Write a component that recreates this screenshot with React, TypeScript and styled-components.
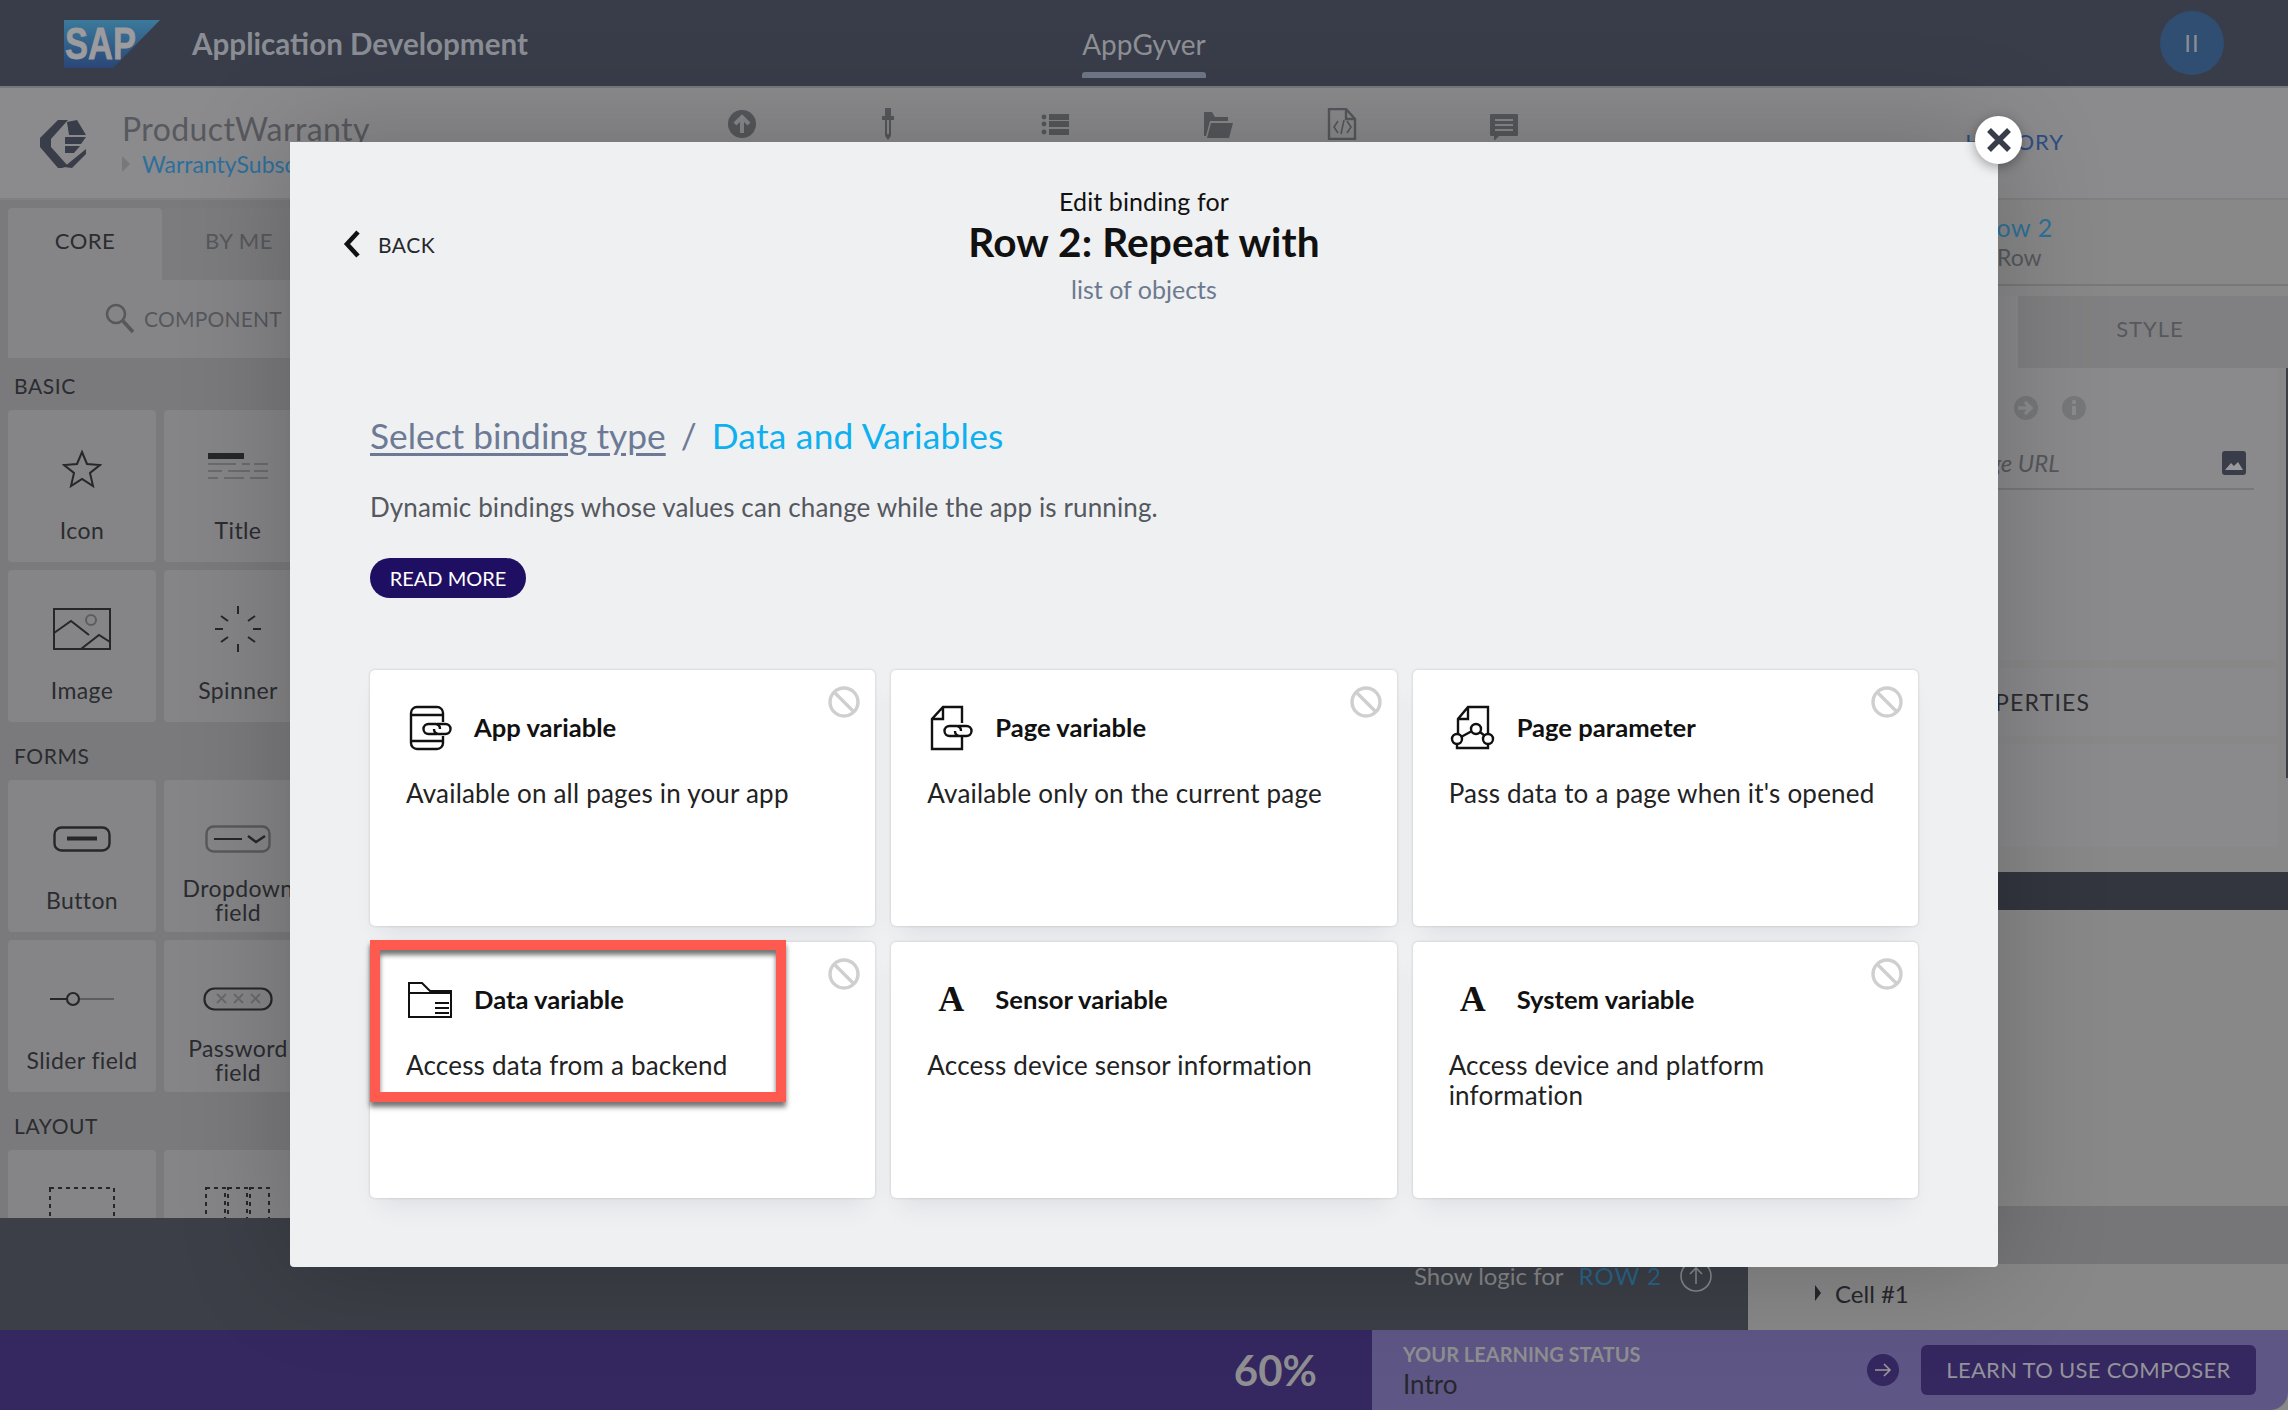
import React from "react"
import styled, { createGlobalStyle } from "styled-components"

const FONT = `Lato, "Open Sans", sans-serif`

const Global = createGlobalStyle`
  html, body {
    margin: 0;
    padding: 0;
    background: #888889;
  }
  * {
    box-sizing: border-box;
  }
`

const Chain = ({ x, y }: { x: number; y: number }) => (
  <g transform={`translate(${x} ${y})`} fill="none" stroke="#111" strokeWidth="2.4">
    <path d="M14 11H5.5a5 5 0 0 1 0-10H13a5 5 0 0 1 4 5" />
    <path d="M14 1h8.5a5 5 0 0 1 0 10H15a5 5 0 0 1-4-5" />
  </g>
)

const AppVarIcon = () => (
  <CardSvg viewBox="0 0 44 44">
    <path d="M35 17V8a6 6 0 0 0-6-6H9a6 6 0 0 0-6 6v30a6 6 0 0 0 6 6h20a6 6 0 0 0 6-6v-7M3 10h32M3 36h32" fill="none" stroke="#111" strokeWidth="2.4" />
    <Chain x={15} y={18} />
  </CardSvg>
)

const PageVarIcon = () => (
  <CardSvg viewBox="0 0 44 44">
    <path d="M33 18V2H14L3 14v30h30V32M14 2v12H3" fill="none" stroke="#111" strokeWidth="2.4" />
    <Chain x={15} y={20} />
  </CardSvg>
)

const PageParamIcon = () => (
  <CardSvg viewBox="0 0 44 44">
    <path d="M37 28V2H17L7 14v15M6 39v4h31v-4M17 2v12H7M10 32l11-6M29 27l5 4" fill="none" stroke="#111" strokeWidth="2.4" />
    <circle cx="6" cy="34" r="5" fill="none" stroke="#111" strokeWidth="2.4" />
    <circle cx="25" cy="24" r="5" fill="none" stroke="#111" strokeWidth="2.4" />
    <circle cx="37" cy="34" r="5" fill="none" stroke="#111" strokeWidth="2.4" />
  </CardSvg>
)

const DataVarIcon = () => (
  <CardSvg viewBox="0 0 44 44">
    <path d="M1 6h13l8 8h21v26H1zM1 16h42" fill="none" stroke="#111" strokeWidth="2" />
    <path d="M27 26h14M27 31h14M27 36h14" fill="none" stroke="#111" strokeWidth="2" />
  </CardSvg>
)

const BlockIcon = () => (
  <BlockSvg viewBox="0 0 32 32">
    <circle cx="16" cy="16" r="14" fill="none" stroke="#cfcfcf" strokeWidth="3.4" />
    <path d="M6 6l20 20" stroke="#cfcfcf" strokeWidth="3.4" />
  </BlockSvg>
)

const LetterIcon = () => <Letter>A</Letter>

const SapLogo = () => (
  <svg width="96" height="48" viewBox="0 0 96 48">
    <defs>
      <linearGradient id="sapBlue" x1="0" y1="0" x2="0" y2="1">
        <stop offset="0" stopColor="#3b7a9b" />
        <stop offset="1" stopColor="#2a4678" />
      </linearGradient>
    </defs>
    <polygon points="0,0 96,0 49,48 0,48" fill="url(#sapBlue)" />
    <text
      x="1"
      y="39"
      fontFamily="Liberation Sans"
      fontWeight="700"
      fontSize="44"
      textLength="71"
      lengthAdjust="spacingAndGlyphs"
      stroke="#9c9c9f"
      strokeWidth="0.8"
      fill="#9c9c9f"
    >
      SAP
    </text>
  </svg>
)

const ComposerLogo = () => (
  <svg width="46" height="48" viewBox="0 0 46 48">
    <g fill="#383d49">
      <polygon points="0,18 18,0 28,0 11,19 11,27 28,46 22,48 18,48 0,27" />
      <polygon points="27,2 37,0 46,15 29,15" />
      <polygon points="25,17 46,17 41,24 25,24" />
      <polygon points="25,26 40,26 34,33 25,33" />
      <polygon points="46,29 46,34 32,48 24,47" />
    </g>
  </svg>
)

const toolIcons = [
  { offset: 0, node: (
    <svg width="32" height="32" viewBox="0 0 32 32">
      <circle cx="16" cy="16" r="14" fill="#57585c" />
      <path d="M16 25V10M9 16l7-7 7 7" fill="none" stroke="#8a8a8c" strokeWidth="4" />
    </svg>
  ) },
  { offset: 114, node: (
    <svg width="32" height="32" viewBox="0 0 32 32">
      <path d="M13 0h6v8h3v4h-3v16l-3 4-3-4V12h-3V8h3z" fill="#57585c" />
      <path d="M15 12h2v14h-2z" fill="#8a8a8c" />
    </svg>
  ) },
  { offset: 136, node: (
    <svg width="32" height="32" viewBox="0 0 32 32">
      <path d="M9 6h20v6H9zM9 13h20v6H9zM9 21h20v6H9z" fill="#57585c" />
      <circle cx="4" cy="9" r="2.4" fill="#57585c" />
      <circle cx="4" cy="16" r="2.4" fill="#57585c" />
      <circle cx="4" cy="24" r="2.4" fill="#57585c" />
    </svg>
  ) },
  { offset: 130, node: (
    <svg width="32" height="32" viewBox="0 0 32 32">
      <path d="M2 4h8l3 5h13v4H8L4 28H2z" fill="#57585c" />
      <path d="M9 15h22l-4 15H5z" fill="#57585c" />
    </svg>
  ) },
  { offset: 92, node: (
    <svg width="32" height="32" viewBox="0 0 32 32">
      <path d="M3 1h17l9 10v20H3zM20 1v10h9" fill="none" stroke="#57585c" strokeWidth="2.4" />
      <path d="M12 13l-4 6 4 6M21 13l4 6-4 6M18 12l-3 14" fill="none" stroke="#57585c" strokeWidth="1.6" />
    </svg>
  ) },
  { offset: 130, node: (
    <svg width="32" height="32" viewBox="0 0 32 32">
      <path d="M3 6h26a1 1 0 0 1 1 1v20a1 1 0 0 1-1 1H11l-5 5v-5H3a1 1 0 0 1-1-1V7a1 1 0 0 1 1-1z" fill="#57585c" />
      <path d="M7 12h18M7 17h18M7 22h18" stroke="#8a8a8c" strokeWidth="2" />
    </svg>
  ) },
]

const StarIcon = () => (
  <svg width="40" height="40" viewBox="0 0 40 40">
    <polygon points="20,3 25,15 38,16 28,24 31,37 20,30 9,37 12,24 2,16 15,15" fill="none" stroke="#26272b" strokeWidth="2" />
  </svg>
)

const TitleIcon = () => (
  <svg width="60" height="32" viewBox="0 0 60 32">
    <rect x="0" y="0" width="36" height="6" fill="#26272b" />
    <path d="M0 11h28M34 11h8M46 11h14M0 18h14M20 18h22M46 18h14M0 25h10M16 25h20M42 25h18" stroke="#6a6b6f" strokeWidth="2" />
  </svg>
)

const ImageIcon = () => (
  <svg width="58" height="42" viewBox="0 0 58 42">
    <rect x="1" y="1" width="56" height="40" fill="none" stroke="#26272b" strokeWidth="2" />
    <path d="M1 25l17-12 18 14M28 41l18-14 11 7" fill="none" stroke="#26272b" strokeWidth="2" />
    <circle cx="38" cy="12" r="5" fill="none" stroke="#5c5d61" strokeWidth="2" />
  </svg>
)

const SpinnerIcon = () => (
  <svg width="48" height="48" viewBox="0 0 48 48">
    <path d="M24 1v8M24 39v8M1 24h8M39 24h8M7 11l7 5M34 32l7 5M41 11l-7 5M14 32l-7 5" stroke="#26272b" strokeWidth="2" />
  </svg>
)

const ButtonIcon = () => (
  <svg width="58" height="26" viewBox="0 0 58 26">
    <rect x="1.5" y="1.5" width="55" height="23" rx="7" fill="none" stroke="#26272b" strokeWidth="2.4" />
    <path d="M14 12.5h30" stroke="#26272b" strokeWidth="4" />
  </svg>
)

const DropdownIcon = () => (
  <svg width="66" height="28" viewBox="0 0 66 28">
    <rect x="1.5" y="1.5" width="63" height="25" rx="7" fill="none" stroke="#58595d" strokeWidth="2.4" />
    <path d="M9 14h28" stroke="#26272b" strokeWidth="2" />
    <path d="M43 11l8 6 9-6" fill="none" stroke="#26272b" strokeWidth="2.4" />
  </svg>
)

const SliderIcon = () => (
  <svg width="66" height="18" viewBox="0 0 66 18">
    <path d="M1 9h17" stroke="#26272b" strokeWidth="2" />
    <circle cx="24" cy="9" r="6" fill="none" stroke="#26272b" strokeWidth="2.2" />
    <path d="M31 9h34" stroke="#5c5d61" strokeWidth="2" />
  </svg>
)

const PasswordIcon = () => (
  <svg width="70" height="24" viewBox="0 0 70 24">
    <rect x="1.5" y="1.5" width="67" height="21" rx="10" fill="none" stroke="#26272b" strokeWidth="2.2" />
    <path d="M14 7l9 9M23 7l-9 9M31 7l9 9M40 7l-9 9M48 7l9 9M57 7l-9 9" stroke="#68696d" strokeWidth="1.8" />
  </svg>
)

const DashedIcon = () => (
  <svg width="66" height="44" viewBox="0 0 66 44">
    <rect x="1" y="1" width="64" height="42" fill="none" stroke="#26272b" strokeWidth="2" strokeDasharray="4 4" />
  </svg>
)

const DashedColsIcon = () => (
  <svg width="66" height="44" viewBox="0 0 66 44">
    <rect x="1" y="1" width="19" height="42" fill="none" stroke="#26272b" strokeWidth="2" strokeDasharray="4 4" />
    <rect x="23" y="1" width="19" height="42" fill="none" stroke="#26272b" strokeWidth="2" strokeDasharray="4 4" />
    <rect x="45" y="1" width="19" height="42" fill="none" stroke="#26272b" strokeWidth="2" strokeDasharray="4 4" />
  </svg>
)

// the last row runs under the logic bar, so its labels are never seen
const palette = [
  {
    title: "BASIC",
    tiles: [
      { id: "icon", label: "Icon", icon: <StarIcon /> },
      { id: "title", label: "Title", icon: <TitleIcon /> },
      { id: "image", label: "Image", icon: <ImageIcon /> },
      { id: "spinner", label: "Spinner", icon: <SpinnerIcon /> },
    ],
  },
  {
    title: "FORMS",
    tiles: [
      { id: "button", label: "Button", icon: <ButtonIcon /> },
      { id: "dropdown", label: "Dropdown field", icon: <DropdownIcon /> },
      { id: "slider", label: "Slider field", icon: <SliderIcon /> },
      { id: "password", label: "Password field", icon: <PasswordIcon /> },
    ],
  },
  {
    title: "LAYOUT",
    tiles: [
      { id: "box", label: "", icon: <DashedIcon /> },
      { id: "cols", label: "", icon: <DashedColsIcon /> },
    ],
  },
]

const bindings = [
  { title: "App variable", text: "Available on all pages in your app", icon: <AppVarIcon />, blocked: true },
  { title: "Page variable", text: "Available only on the current page", icon: <PageVarIcon />, blocked: true },
  { title: "Page parameter", text: "Pass data to a page when it's opened", icon: <PageParamIcon />, blocked: true },
  { title: "Data variable", text: "Access data from a backend", icon: <DataVarIcon />, blocked: true, marked: true },
  { title: "Sensor variable", text: "Access device sensor information", icon: <LetterIcon />, blocked: false },
  { title: "System variable", text: "Access device and platform information", icon: <LetterIcon />, blocked: true },
]

export default function App() {
  return (
    <>
      <Global />
      <Page>
        <TopBar>
          <Brand>
            <SapLogo />
            <BrandName>Application Development</BrandName>
          </Brand>
          <AppTab>AppGyver</AppTab>
          <UserSlot>
            <Avatar>II</Avatar>
          </UserSlot>
        </TopBar>
        <Toolbar>
          <ComposerLogo />
          <ProjectBlock>
            <ProjectName>ProductWarranty</ProjectName>
            <ProjectPage>
              <Wedge />
              WarrantySubscription
            </ProjectPage>
          </ProjectBlock>
          <ToolIcons>
            {toolIcons.map((t, i) => (
              <ToolIcon key={i} $offset={t.offset}>
                {t.node}
              </ToolIcon>
            ))}
          </ToolIcons>
          <HistoryLink>HISTORY</HistoryLink>
        </Toolbar>
        <Workspace>
          <LeftArea>
            <LeftPanel>
              <PanelTabs>
                <PanelTab $active>CORE</PanelTab>
                <PanelTab>BY ME</PanelTab>
              </PanelTabs>
              <SearchRow>
                <svg width="32" height="32" viewBox="0 0 32 32">
                  <circle cx="12" cy="12" r="9" fill="none" stroke="#57585c" strokeWidth="2.6" />
                  <path d="M19 19l10 11" stroke="#57585c" strokeWidth="3.6" />
                </svg>
                <span>COMPONENT</span>
              </SearchRow>
              {palette.map((section, i) => (
                <React.Fragment key={section.title}>
                  <SectionLabel $first={i === 0}>{section.title}</SectionLabel>
                  <TileGrid>
                    {section.tiles.map((tile) => (
                      <Tile key={tile.id}>
                        <TileArt>{tile.icon}</TileArt>
                        <TileLabel>{tile.label}</TileLabel>
                      </Tile>
                    ))}
                  </TileGrid>
                </React.Fragment>
              ))}
            </LeftPanel>
            <LogicBar>
              <LogicText>Show logic for</LogicText>
              <LogicTarget>ROW 2</LogicTarget>
              <LogicIcon width="32" height="32" viewBox="0 0 32 32">
                <circle cx="16" cy="16" r="15" fill="none" stroke="#85878a" strokeWidth="1.6" />
                <path d="M16 24V8M10 14l6-6 6 6" fill="none" stroke="#85878a" strokeWidth="1.6" />
              </LogicIcon>
            </LogicBar>
          </LeftArea>
          <RightPanel>
            <Scrollbar />
            <SelectedInfo>
              <SelectedName>Row 2</SelectedName>
              <SelectedType>Row</SelectedType>
            </SelectedInfo>
            <SideTabs>
              <SideTab $active>PROPERTIES</SideTab>
              <SideTab>STYLE</SideTab>
            </SideTabs>
            <PropsCard>
              <HintIcons>
                <svg width="24" height="24" viewBox="0 0 24 24">
                  <circle cx="12" cy="12" r="12" fill="#77787a" />
                  <path d="M4 12h11M11 6l6 6-6 6" fill="none" stroke="#8c8c8e" strokeWidth="3.4" />
                </svg>
                <svg width="24" height="24" viewBox="0 0 24 24">
                  <circle cx="12" cy="12" r="12" fill="#77787a" />
                  <path d="M12 10v9" stroke="#8c8c8e" strokeWidth="4" />
                  <circle cx="12" cy="6" r="2.2" fill="#8c8c8e" />
                </svg>
              </HintIcons>
              <UrlRow>
                <UrlText>Image URL</UrlText>
                <svg width="24" height="24" viewBox="0 0 24 24">
                  <rect width="24" height="24" rx="3" fill="#383d49" />
                  <path d="M3 19l6-7 3 3 4-4 5 8z" fill="#99999b" />
                </svg>
              </UrlRow>
            </PropsCard>
            <SideSection $height={68}>PROPERTIES</SideSection>
            <SideSection $height={103} />
            <DarkBand />
            <EmptyArea />
            <ShadeBand />
            <TreeRow>
              <Caret />
              Cell #1
            </TreeRow>
          </RightPanel>
        </Workspace>
        <StatusBar>
          <PercentCell>60%</PercentCell>
          <LearnCell>
            <LearnInfo>
              <LearnCaption>YOUR LEARNING STATUS</LearnCaption>
              <LearnValue>Intro</LearnValue>
            </LearnInfo>
            <LearnArrow>
              <svg width="20" height="20" viewBox="0 0 20 20">
                <path d="M2 10h15M11 4l6 6-6 6" fill="none" stroke="#9a9a9c" strokeWidth="1.6" />
              </svg>
            </LearnArrow>
            <LearnButton>LEARN TO USE COMPOSER</LearnButton>
          </LearnCell>
        </StatusBar>

        <Modal>
          <CloseButton>
            <svg width="26" height="26" viewBox="0 0 26 26">
              <path d="M3 3l20 20M23 3L3 23" stroke="#383d49" strokeWidth="5.5" />
            </svg>
          </CloseButton>
          <ModalHead>
            <BackLink>
              <svg width="18" height="28" viewBox="0 0 18 28">
                <path d="M15 2L4 14l11 12" fill="none" stroke="#111" strokeWidth="4.6" />
              </svg>
              BACK
            </BackLink>
            <HeadCenter>
              <HeadLead>Edit binding for</HeadLead>
              <HeadTitle>Row 2: Repeat with</HeadTitle>
              <HeadType>list of objects</HeadType>
            </HeadCenter>
          </ModalHead>
          <Crumbs>
            <CrumbLink>Select binding type</CrumbLink>
            <CrumbSep>/</CrumbSep>
            <CrumbCurrent>Data and Variables</CrumbCurrent>
          </Crumbs>
          <Description>Dynamic bindings whose values can change while the app is running.</Description>
          <ReadMore>READ MORE</ReadMore>
          <CardGrid>
            {bindings.map((b) => (
              <Card key={b.title}>
                {b.blocked && <BlockIcon />}
                <CardHead>
                  <IconSlot>{b.icon}</IconSlot>
                  <CardTitle>{b.title}</CardTitle>
                </CardHead>
                <CardText>{b.text}</CardText>
                {b.marked && <Highlight />}
              </Card>
            ))}
          </CardGrid>
        </Modal>
      </Page>
    </>
  )
}

const Page = styled.div`
  position: relative;
  width: 2288px;
  height: 1410px;
  overflow: hidden;
  display: flex;
  flex-direction: column;
  background: #888889;
  font-family: ${FONT};
`

const TopBar = styled.header`
  flex: none;
  height: 88px;
  display: grid;
  grid-template-columns: 1fr auto 1fr;
  background: #383d49;
  border-bottom: 2px solid #77787b;
`

const Brand = styled.div`
  display: flex;
  align-items: flex-start;
  gap: 32px;
  padding: 20px 0 0 64px;
`

const BrandName = styled.div`
  font-size: 29.6px;
  font-weight: 700;
  line-height: 48px;
  color: #8a8d93;
`

const AppTab = styled.div`
  position: relative;
  width: 124px;
  height: 86px;
  text-align: center;
  line-height: 88px;
  font-size: 28px;
  color: #8e9095;
  white-space: nowrap;
  &::after {
    content: "";
    position: absolute;
    left: 0;
    right: 0;
    bottom: 8px;
    height: 6px;
    border-radius: 3px 3px 0 0;
    background: #6f7787;
  }
`

const UserSlot = styled.div`
  display: flex;
  justify-content: flex-end;
  align-items: center;
  padding-right: 64px;
`

const Avatar = styled.div`
  width: 64px;
  height: 64px;
  border-radius: 50%;
  background: #2f4e71;
  color: #8a8d93;
  font-size: 24px;
  line-height: 64px;
  text-align: center;
  letter-spacing: 1px;
`

const Toolbar = styled.div`
  flex: none;
  height: 112px;
  display: flex;
  align-items: flex-start;
  padding: 32px 224px 0 40px;
  background: #8b8b8d;
  border-bottom: 2px solid #808082;
`

const ProjectBlock = styled.div`
  width: 604px;
  margin-left: 36px;
  margin-top: -11px;
  overflow: hidden;
  white-space: nowrap;
`

const ProjectName = styled.div`
  font-size: 32px;
  line-height: 40px;
  color: #57595f;
  letter-spacing: 0.4px;
`

const ProjectPage = styled.div`
  display: flex;
  align-items: center;
  gap: 12px;
  font-size: 23px;
  line-height: 30px;
  color: #2e6f9c;
`

const Wedge = styled.span`
  width: 0;
  height: 0;
  border-style: solid;
  border-width: 8px 0 8px 8px;
  border-color: transparent transparent transparent #77787a;
`

const ToolIcons = styled.div`
  display: flex;
  margin-top: -12px;
`

const ToolIcon = styled.div<{ $offset: number }>`
  width: 32px;
  height: 32px;
  margin-left: ${(p) => p.$offset}px;
`

const HistoryLink = styled.div`
  margin-left: auto;
  margin-top: 8px;
  font-size: 22px;
  letter-spacing: 1px;
  color: #2d4e82;
`

const Workspace = styled.div`
  flex: 1;
  min-height: 0;
  display: flex;
`

const LeftArea = styled.div`
  flex: 1;
  min-width: 0;
  display: flex;
  flex-direction: column;
`

const LeftPanel = styled.div`
  flex: 1;
  min-height: 0;
  width: 320px;
  padding: 8px 0 0 8px;
  overflow: hidden;
  background: #7a7a7c;
`

const PanelTabs = styled.div`
  display: flex;
  height: 72px;
`

const PanelTab = styled.div<{ $active?: boolean }>`
  width: 154px;
  text-align: center;
  line-height: 66px;
  font-size: 22px;
  letter-spacing: 0.5px;
  color: ${(p) => (p.$active ? "#2b2c30" : "#57585c")};
  background: ${(p) => (p.$active ? "#858587" : "#7c7c7e")};
  border-radius: 4px 4px 0 0;
`

const SearchRow = styled.div`
  height: 78px;
  width: 312px;
  display: flex;
  align-items: center;
  gap: 8px;
  padding: 0 0 2px 96px;
  background: #858587;
  font-size: 21px;
  letter-spacing: 0.2px;
  color: #57585c;
`

const SectionLabel = styled.div<{ $first?: boolean }>`
  height: 52px;
  margin-top: ${(p) => (p.$first ? 0 : 6)}px;
  padding: 16px 0 0 6px;
  font-size: 21px;
  line-height: 24px;
  letter-spacing: 0.6px;
  color: #2b2c30;
`

const TileGrid = styled.div`
  display: grid;
  grid-template-columns: 148px 148px;
  grid-auto-rows: 152px;
  gap: 8px;
`

const Tile = styled.div`
  display: grid;
  grid-template-rows: 88px 64px;
  border-radius: 4px;
  background: #858587;
`

const TileArt = styled.div`
  display: flex;
  align-items: center;
  justify-content: center;
  padding-top: 30px;
`

const TileLabel = styled.div`
  display: flex;
  align-items: center;
  justify-content: center;
  padding: 0 10px 1px;
  text-align: center;
  font-size: 23px;
  line-height: 24px;
  letter-spacing: 0.4px;
  color: #2b2c30;
`

const LogicBar = styled.div`
  flex: none;
  height: 112px;
  display: flex;
  justify-content: flex-end;
  gap: 15px;
  padding: 42px 36px 0 0;
  background: #3c3f47;
`

const LogicText = styled.div`
  font-size: 24px;
  line-height: 32px;
  color: #85878a;
`

const LogicTarget = styled.div`
  font-size: 24px;
  line-height: 32px;
  letter-spacing: 1px;
  color: #2a6487;
`

const LogicIcon = styled.svg`
  margin-left: 3px;
`

const RightPanel = styled.aside`
  position: relative;
  flex: none;
  width: 540px;
  display: flex;
  flex-direction: column;
  background: #888889;
`

const Scrollbar = styled.div`
  position: absolute;
  top: 168px;
  right: 0;
  width: 2px;
  height: 410px;
  background: #3b3e47;
`

const SelectedInfo = styled.div`
  flex: none;
  height: 86px;
  padding: 12px 0 0 233px;
  border-bottom: 2px solid #77787a;
`

const SelectedName = styled.div`
  font-size: 25px;
  line-height: 30px;
  letter-spacing: 0.6px;
  color: #2e7199;
`

const SelectedType = styled.div`
  margin-left: 16px;
  margin-top: 1px;
  font-size: 23px;
  line-height: 28px;
  color: #57585c;
`

const SideTabs = styled.div`
  flex: none;
  display: flex;
  height: 72px;
  margin-top: 10px;
`

const SideTab = styled.div<{ $active?: boolean }>`
  width: 270px;
  padding-right: ${(p) => (p.$active ? 0 : 6)}px;
  text-align: center;
  line-height: 66px;
  font-size: 22px;
  letter-spacing: 1px;
  color: #57585c;
  background: ${(p) => (p.$active ? "#8a8a8c" : "#808082")};
`

const PropsCard = styled.div`
  flex: none;
  width: 530px;
  height: 292px;
  padding: 28px 24px 0 0;
  background: #8a8a8c;
`

const HintIcons = styled.div`
  display: flex;
  justify-content: flex-start;
  gap: 24px;
  padding-left: 266px;
`

const UrlRow = styled.div`
  display: flex;
  justify-content: space-between;
  align-items: center;
  height: 50px;
  margin-top: 20px;
  padding: 0 8px 3px 204px;
  border-bottom: 2px solid #77787a;
`

const UrlText = styled.div`
  font-size: 24px;
  font-style: italic;
  color: #57585c;
  white-space: nowrap;
`

const SideSection = styled.div<{ $height: number }>`
  flex: none;
  width: 530px;
  height: ${(p) => p.$height}px;
  margin-top: 8px;
  padding-left: 197px;
  line-height: ${(p) => p.$height}px;
  font-size: 23px;
  letter-spacing: 1.2px;
  color: #2b2c30;
  background: #8a8a8c;
  border-radius: 4px;
`

const DarkBand = styled.div`
  flex: none;
  height: 38px;
  margin-top: 25px;
  background: #33363f;
`

const EmptyArea = styled.div`
  flex: none;
  height: 296px;
`

const ShadeBand = styled.div`
  flex: none;
  height: 58px;
  background: #767679;
`

const TreeRow = styled.div`
  flex: 1;
  display: flex;
  align-items: center;
  gap: 14px;
  padding: 0 0 8px 67px;
  font-size: 24px;
  color: #26272b;
`

const Caret = styled.span`
  width: 0;
  height: 0;
  border-style: solid;
  border-width: 8px 0 8px 6px;
  border-color: transparent transparent transparent #26272b;
`

const StatusBar = styled.footer`
  flex: none;
  height: 80px;
  display: flex;
  border-radius: 0 0 18px 0;
  overflow: hidden;
`

const PercentCell = styled.div`
  width: 1372px;
  padding-right: 55px;
  text-align: right;
  line-height: 80px;
  font-size: 42px;
  font-weight: 700;
  color: #8f8f92;
  background: #352760;
`

const LearnCell = styled.div`
  flex: 1;
  display: flex;
  align-items: center;
  padding: 0 32px 0 31px;
  background: #5e5685;
`

const LearnInfo = styled.div`
  margin-right: auto;
`

const LearnCaption = styled.div`
  font-size: 20px;
  line-height: 28px;
  font-weight: 700;
  color: #8f8f92;
`

const LearnValue = styled.div`
  font-size: 26px;
  line-height: 32px;
  color: #26272b;
`

const LearnArrow = styled.div`
  width: 32px;
  height: 32px;
  margin-right: 22px;
  display: flex;
  align-items: center;
  justify-content: center;
  border-radius: 50%;
  background: #352760;
`

const LearnButton = styled.div`
  width: 335px;
  height: 50px;
  text-align: center;
  line-height: 50px;
  font-size: 22px;
  letter-spacing: 0.3px;
  color: #93939a;
  background: #352760;
  border-radius: 6px;
`

const Modal = styled.section`
  position: absolute;
  left: 290px;
  top: 142px;
  width: 1708px;
  height: 1125px;
  padding: 44px 80px 0;
  background: #eff0f2;
  border-radius: 0 0 4px 4px;
  box-shadow: 0 0 110px rgba(0, 0, 0, 0.22);
`

const CloseButton = styled.div`
  position: absolute;
  top: -26px;
  right: -24px;
  width: 47px;
  height: 48px;
  display: flex;
  align-items: center;
  justify-content: center;
  border-radius: 50%;
  background: #fff;
  box-shadow: 0 3px 12px rgba(0, 0, 0, 0.35);
`

const ModalHead = styled.div`
  position: relative;
  text-align: center;
`

const BackLink = styled.div`
  position: absolute;
  left: -27px;
  top: 44px;
  display: flex;
  align-items: center;
  gap: 17px;
  font-size: 21px;
  letter-spacing: 0.5px;
  color: #26272b;
`

const HeadCenter = styled.div`
  display: flex;
  flex-direction: column;
`

const HeadLead = styled.div`
  font-size: 25px;
  line-height: 30px;
  letter-spacing: 0.1px;
  color: #111;
`

const HeadTitle = styled.div`
  margin-top: 1px;
  font-size: 40.6px;
  line-height: 50px;
  letter-spacing: 0.1px;
  font-weight: 700;
  color: #111;
`

const HeadType = styled.div`
  margin-top: 7px;
  font-size: 25px;
  line-height: 30px;
  color: #6c7a90;
`

const Crumbs = styled.div`
  display: flex;
  gap: 15px;
  margin-top: 110px;
  font-size: 35.3px;
  line-height: 44px;
`

const CrumbLink = styled.span`
  color: #6d7a96;
  text-decoration: underline;
  text-underline-offset: 4px;
`

const CrumbSep = styled.span`
  color: #6d7a96;
`

const CrumbCurrent = styled.span`
  color: #0fb0f0;
  letter-spacing: 0.25px;
`

const Description = styled.div`
  margin-top: 34px;
  font-size: 26px;
  line-height: 30px;
  letter-spacing: 0.12px;
  color: #55585e;
`

const ReadMore = styled.div`
  width: 156px;
  height: 40px;
  margin-top: 36px;
  text-align: center;
  line-height: 40px;
  font-size: 20px;
  color: #fff;
  background: #1f0f63;
  border-radius: 20px;
`

const CardGrid = styled.div`
  display: grid;
  grid-template-columns: repeat(3, 1fr);
  grid-auto-rows: 256px;
  gap: 16px;
  margin-top: 72px;
`

const Card = styled.div`
  position: relative;
  padding: 35px 0 0 38px;
  background: #fff;
  border-radius: 5px;
  box-shadow: 0 0 3px rgba(0, 0, 0, 0.18), 0 16px 24px -10px rgba(60, 70, 90, 0.1);
`

const CardSvg = styled.svg`
  width: 44px;
  height: 44px;
  overflow: visible;
`

const BlockSvg = styled.svg`
  position: absolute;
  top: 16px;
  right: 15px;
  width: 32px;
  height: 32px;
`

const CardHead = styled.div`
  display: flex;
  align-items: center;
  gap: 22px;
`

const IconSlot = styled.div`
  width: 44px;
  height: 44px;
`

const Letter = styled.div`
  text-align: center;
  font-family: "Liberation Serif", serif;
  font-weight: 700;
  font-size: 36px;
  line-height: 44px;
  color: #111;
`

const CardTitle = styled.div`
  font-size: 25.6px;
  font-weight: 700;
  color: #111;
`

const CardText = styled.div`
  margin: 29px 0 0 -2px;
  max-width: 440px;
  font-size: 26px;
  line-height: 30px;
  letter-spacing: 0.2px;
  color: #222;
`

const Highlight = styled.div`
  position: absolute;
  left: 0;
  top: -2px;
  width: 416px;
  height: 162px;
  border: 10px solid #ff5a4f;
  box-shadow: 0 5px 5px rgba(0, 0, 0, 0.55), inset 0 5px 5px rgba(0, 0, 0, 0.55);
  pointer-events: none;
`
